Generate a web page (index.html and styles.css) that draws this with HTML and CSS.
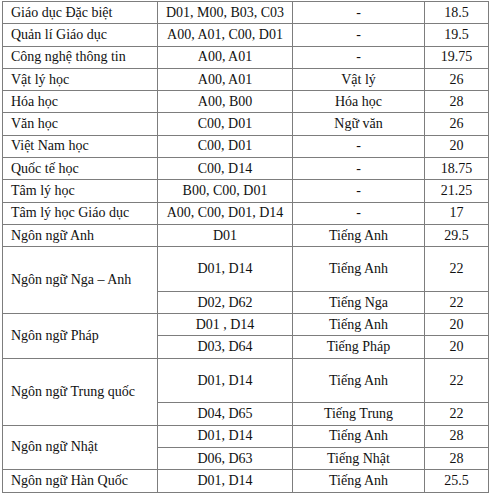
FILE: index.html
```html
<!DOCTYPE html>
<html lang="vi">
<head>
<meta charset="utf-8">
<title>Điểm chuẩn</title>
<link rel="stylesheet" href="styles.css">
</head>
<body>
<table class="scores">
  <colgroup>
    <col class="c-major">
    <col class="c-combo">
    <col class="c-subject">
    <col class="c-score">
  </colgroup>
  <tbody>
    <tr><td class="major">Giáo dục Đặc biệt</td><td>D01, M00, B03, C03</td><td>-</td><td>18.5</td></tr>
    <tr><td class="major">Quản lí Giáo dục</td><td>A00, A01, C00, D01</td><td>-</td><td>19.5</td></tr>
    <tr><td class="major">Công nghệ thông tin</td><td>A00, A01</td><td>-</td><td>19.75</td></tr>
    <tr><td class="major">Vật lý học</td><td>A00, A01</td><td>Vật lý</td><td>26</td></tr>
    <tr><td class="major">Hóa học</td><td>A00, B00</td><td>Hóa học</td><td>28</td></tr>
    <tr><td class="major">Văn học</td><td>C00, D01</td><td>Ngữ văn</td><td>26</td></tr>
    <tr><td class="major">Việt Nam học</td><td>C00, D01</td><td>-</td><td>20</td></tr>
    <tr><td class="major">Quốc tế học</td><td>C00, D14</td><td>-</td><td>18.75</td></tr>
    <tr><td class="major">Tâm lý học</td><td>B00, C00, D01</td><td>-</td><td>21.25</td></tr>
    <tr><td class="major">Tâm lý học Giáo dục</td><td>A00, C00, D01, D14</td><td>-</td><td>17</td></tr>
    <tr><td class="major">Ngôn ngữ Anh</td><td>D01</td><td>Tiếng Anh</td><td>29.5</td></tr>
    <tr class="tall"><td class="major" rowspan="2">Ngôn ngữ Nga – Anh</td><td>D01, D14</td><td>Tiếng Anh</td><td>22</td></tr>
    <tr><td>D02, D62</td><td>Tiếng Nga</td><td>22</td></tr>
    <tr><td class="major" rowspan="2">Ngôn ngữ Pháp</td><td>D01 , D14</td><td>Tiếng Anh</td><td>20</td></tr>
    <tr><td>D03, D64</td><td>Tiếng Pháp</td><td>20</td></tr>
    <tr class="tall"><td class="major" rowspan="2">Ngôn ngữ Trung quốc</td><td>D01, D14</td><td>Tiếng Anh</td><td>22</td></tr>
    <tr><td>D04, D65</td><td>Tiếng Trung</td><td>22</td></tr>
    <tr><td class="major" rowspan="2">Ngôn ngữ Nhật</td><td>D01, D14</td><td>Tiếng Anh</td><td>28</td></tr>
    <tr><td>D06, D63</td><td>Tiếng Nhật</td><td>28</td></tr>
    <tr><td class="major">Ngôn ngữ Hàn Quốc</td><td>D01, D14</td><td>Tiếng Anh</td><td>25.5</td></tr>
  </tbody>
</table>
</body>
</html>
```

FILE: styles.css
```css
html, body {
  margin: 0;
  padding: 0;
  background: #ffffff;
}

body {
  padding: 1px 0 0 2px;
  font-family: "Liberation Serif", "Times New Roman", serif;
  font-size: 14px;
  color: #111111;
}

.scores {
  border-collapse: collapse;
  table-layout: fixed;
  width: 486px;
}

.c-major { width: 155px; }
.c-combo { width: 135px; }
.c-subject { width: 132px; }
.c-score { width: 64px; }

.scores tr {
  height: 22.3px;
}

.scores tr.tall {
  height: 44.6px;
}

.scores td {
  border: 1px solid #7d7d7d;
  padding: 0;
  text-align: center;
  vertical-align: middle;
  line-height: 16px;
  white-space: nowrap;
}

.scores td.major {
  text-align: left;
  padding-left: 8px;
}
```
